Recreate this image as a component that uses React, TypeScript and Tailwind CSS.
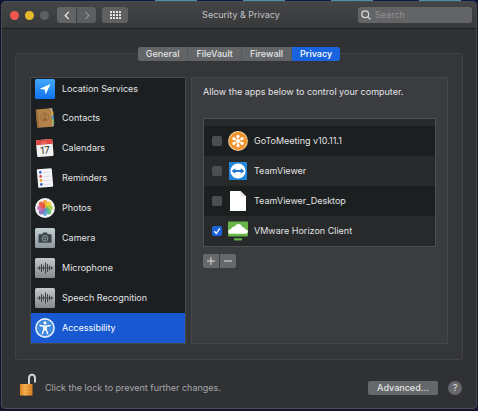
import { useState } from 'react';
import type { ReactNode } from 'react';
import clsx from 'clsx';

function LocationIcon() {
  return (
    <svg viewBox="0 0 20 20" className="size-5">
      <defs>
        <linearGradient id="location-bg" x1="0" y1="0" x2="0" y2="1">
          <stop offset="0" stopColor="#42a8fb" />
          <stop offset="1" stopColor="#1173ee" />
        </linearGradient>
      </defs>
      <rect width="20" height="20" rx="1.5" fill="url(#location-bg)" />
      <path d="M15.5 5 4.8 9.8l5 .9.8 4.7z" fill="#fff" />
    </svg>
  );
}

function ContactsIcon() {
  return (
    <svg viewBox="0 0 20 20" className="size-5">
      <g transform="rotate(-5 10 10)">
        <path d="M15 1h3v18h-3z" fill="#ddd9cf" />
        <path d="M17 4h1.8v4H17z" fill="#d9a43a" />
        <path d="M17 8h1.8v4H17z" fill="#46a0d8" />
        <path d="M17 12h1.8v4H17z" fill="#76b852" />
        <rect x="1.5" y="0.8" width="15.5" height="18.4" rx="1" fill="#b3834b" />
        <path d="M1.5 1.8a1 1 0 0 1 1-1h1v18.4h-1a1 1 0 0 1-1-1z" fill="#9c6e36" />
        <circle cx="9.8" cy="9" r="4" fill="#b0804a" stroke="#8f6432" strokeWidth="0.7" />
        <circle cx="9.8" cy="7.8" r="1.2" fill="#8f6432" />
        <path d="M7.4 11.3c.4-1.8 4.4-1.8 4.800 0-1.400 1.300-3.400 1.300-4.800 0z" fill="#8f6432" />
      </g>
    </svg>
  );
}

function CalendarIcon() {
  return (
    <svg viewBox="0 0 20 20" className="size-5">
      <g transform="rotate(-5 10 10)">
        <rect x="1.5" y="1.5" width="16.5" height="17" rx="1.2" fill="#f4f3f1" />
        <path d="M1.5 2.7c0-.7.5-1.2 1.2-1.2h14.1c.7 0 1.2.5 1.2 1.2v3.8H1.500z" fill="#dc4740" />
        <text x="9.8" y="5.5" textAnchor="middle" fontSize="3.5" fill="#f8b8b2" fontFamily="Inter, sans-serif">
          JUL
        </text>
        <text x="9.8" y="15.8" textAnchor="middle" fontSize="10" fill="#333" fontFamily="Inter, sans-serif">
          17
        </text>
      </g>
    </svg>
  );
}

function RemindersIcon() {
  const dots = ['#3a63c8', '#d9433b', '#ef9d2e', '#3d58a8'];
  return (
    <svg viewBox="0 0 20 20" className="size-5">
      <g transform="rotate(-5 10 10)">
        <rect x="2.5" y="0.7" width="15" height="18.6" rx="1" fill="#f5f4f6" />
        {dots.map((fill, i) => (
          <g key={fill}>
            <circle cx="5.8" cy={4 + i * 4} r="1.4" fill={fill} />
            <path d={`M8.5 ${4.5 + i * 4}h7`} stroke="#d2d2d8" strokeWidth="0.7" />
          </g>
        ))}
      </g>
    </svg>
  );
}

function PhotosIcon() {
  const petals = ['#f09a28', '#f3c92f', '#a9cf46', '#5cb878', '#55a1d8', '#8168bd', '#c86db0', '#e8533f'];
  return (
    <svg viewBox="0 0 20 20" className="size-5">
      <circle cx="10" cy="10" r="9.9" fill="#f7f6f4" />
      {petals.map((fill, i) => (
        <rect
          key={fill}
          x="7.600"
          y="2"
          width="4.8"
          height="7.8"
          rx="2.4"
          fill={fill}
          fillOpacity="0.9"
          transform={`rotate(${i * 45} 10 10)`}
        />
      ))}
    </svg>
  );
}

function CameraIcon() {
  return (
    <svg viewBox="0 0 20 20" className="size-5">
      <defs>
        <linearGradient id="camera-bg" x1="0" y1="0" x2="0" y2="1">
          <stop offset="0" stopColor="#c5d0d5" />
          <stop offset="1" stopColor="#8d979d" />
        </linearGradient>
      </defs>
      <rect width="20" height="20" rx="1.5" fill="url(#camera-bg)" />
      <path
        d="M4.5 6.200h2.600l1.200-1.700h3.400l1.200 1.700h2.600c.6 0 1 .4 1 1v6.600c0 .6-.4 1-1 1h-11c-.6 0-1-.4-1-1V7.200c0-.6.4-1 1-1z"
        fill="#3b444a"
      />
      <circle cx="10" cy="10.3" r="2.9" fill="none" stroke="#98a4aa" strokeWidth="0.9" />
      <circle cx="10" cy="10.3" r="1.3" fill="#78848a" />
    </svg>
  );
}

function WaveIcon() {
  return (
    <svg viewBox="0 0 20 20" className="size-5">
      <defs>
        <linearGradient id="wave-bg" x1="0" y1="0" x2="0" y2="1">
          <stop offset="0" stopColor="#c3c8c8" />
          <stop offset="1" stopColor="#868a8a" />
        </linearGradient>
      </defs>
      <rect width="20" height="20" rx="1.5" fill="url(#wave-bg)" />
      <path
        d="M2 10h16M4.500 8v4M6.500 6v8M8.500 7.500v5M10.500 4.500v11M12.500 6v8M14.500 7.500v5M16.500 8.500v3"
        stroke="#3f4446"
        strokeWidth="1"
        fill="none"
      />
    </svg>
  );
}

function AccessibilityIcon() {
  return (
    <svg viewBox="0 0 20 20" className="size-5">
      <circle cx="10" cy="10" r="9.9" fill="#e1edfa" />
      <circle cx="10" cy="10" r="8.3" fill="#4389de" />
      <circle cx="10" cy="4.9" r="1.6" fill="#fff" />
      <path
        d="M5 7.500 8.800 8.200v3.200L7.400 15.500M15 7.500l-3.800.7v3.200l1.400 4.100M9.200 8.300h1.600v3.400H9.200z"
        stroke="#fff"
        strokeWidth="1.4"
        strokeLinecap="round"
        strokeLinejoin="round"
        fill="none"
      />
    </svg>
  );
}

function GoToMeetingIcon() {
  return (
    <svg viewBox="0 0 20 20" className="size-5">
      <circle cx="10" cy="10" r="9.9" fill="#f6d5a6" />
      <circle cx="10" cy="10" r="9" fill="#ef942d" />
      <g fill="#fff">
        {[0, 60, 120, 180, 240, 300].map((angle) => (
          <g key={angle} transform={`rotate(${angle} 10 10)`}>
            <rect x="9.4" y="5.5" width="1.2" height="4" />
            <circle cx="10" cy="5.3" r="1.6" />
          </g>
        ))}
        <circle cx="10" cy="10" r="1.6" />
      </g>
    </svg>
  );
}

function TeamViewerIcon() {
  return (
    <svg viewBox="0 0 20 20" className="size-5">
      <rect x="1" y="1" width="18" height="18" rx="0.5" fill="#2387dc" />
      <circle cx="10" cy="10" r="7.6" fill="#fff" />
      <path d="m3.600 10 3.700-2.800v1.900h5.400V7.200l3.700 2.800-3.700 2.800v-1.900H7.300v1.900z" fill="#1e78cb" />
    </svg>
  );
}

function DocumentIcon() {
  return (
    <svg viewBox="0 0 20 20" className="size-5">
      <path d="M2 0h10.500L18 5.500V20H2z" fill="#fff" />
      <path d="M12.500 0 18 5.500h-5.500z" fill="#e6e6e6" />
    </svg>
  );
}

function HorizonIcon() {
  return (
    <svg viewBox="0 0 20 20" className="size-5">
      <rect y="0.5" width="20" height="15" rx="1" fill="#68b648" />
      <path
        d="M2.800 12.800c-3.600 0-3.400-4.500.2-4.500C3.300 6.500 5 5.500 6.300 6c1.700-4 7-4 8 0 1.600-.2 2.700 1 2.800 2.300 3.600 0 3.600 4.500.2 4.500z"
        fill="#fff"
      />
      <path d="M6 17.200h8v1.500c0 .5-.4.800-1 .8H7c-.6 0-1-.3-1-.8z" fill="#68b648" />
    </svg>
  );
}

function PadlockIcon() {
  return (
    <svg viewBox="0 0 17 23" className="h-[23px] w-[17px] shrink-0">
      <defs>
        <linearGradient id="padlock" x1="0" y1="0" x2="1" y2="0">
          <stop offset="0" stopColor="#d98322" />
          <stop offset="0.4" stopColor="#f8b554" />
          <stop offset="1" stopColor="#d47c1c" />
        </linearGradient>
      </defs>
      <path d="M9 11.500V5.500C9 .5 15 .5 15 5.500v4" fill="none" stroke="#cfd3d5" strokeWidth="2" />
      <rect y="11" width="12.5" height="11.5" rx="0.5" fill="url(#padlock)" />
      <path d="M0 14h12.500M0 17h12.500M0 20h12.500" stroke="#c9781f" strokeWidth="0.3" />
    </svg>
  );
}

const tabs = ['General', 'FileVault', 'Firewall', 'Privacy'];

const services: { name: string; icon: ReactNode }[] = [
  { name: 'Location Services', icon: <LocationIcon /> },
  { name: 'Contacts', icon: <ContactsIcon /> },
  { name: 'Calendars', icon: <CalendarIcon /> },
  { name: 'Reminders', icon: <RemindersIcon /> },
  { name: 'Photos', icon: <PhotosIcon /> },
  { name: 'Camera', icon: <CameraIcon /> },
  { name: 'Microphone', icon: <WaveIcon /> },
  { name: 'Speech Recognition', icon: <WaveIcon /> },
  { name: 'Accessibility', icon: <AccessibilityIcon /> },
];

const apps: { name: string; icon: ReactNode; allowed: boolean }[] = [
  { name: 'GoToMeeting v10.11.1', icon: <GoToMeetingIcon />, allowed: false },
  { name: 'TeamViewer', icon: <TeamViewerIcon />, allowed: false },
  { name: 'TeamViewer_Desktop', icon: <DocumentIcon />, allowed: false },
  { name: 'VMware Horizon Client', icon: <HorizonIcon />, allowed: true },
];

function TitleBar() {
  return (
    <header className="grid h-[27px] grid-cols-[1fr_auto_1fr] items-center border-b border-[#1d1e20] bg-linear-to-b from-[#444548] to-[#38393b] pr-1 pl-2">
      <div className="flex items-center">
        <div className="flex gap-[6px]">
          <button aria-label="Close" className="size-[9px] rounded-full bg-[#f0574f]" />
          <button aria-label="Minimize" className="size-[9px] rounded-full bg-[#e5b92c]" />
          <button aria-label="Zoom" className="size-[9px] rounded-full bg-[#5d5f62]" />
        </div>
        <div className="ml-2 flex gap-px">
          <button aria-label="Back" className="flex h-4 w-[19px] items-center justify-center rounded-l-[3px] bg-[#626466]">
            <svg viewBox="0 0 6 10" className="h-[9px] w-[6px]" fill="none" stroke="#f2f2f2" strokeWidth="1.3">
              <path d="M5 1 1 5l4 4" />
            </svg>
          </button>
          <button aria-label="Forward" className="flex h-4 w-[19px] items-center justify-center rounded-r-[3px] bg-[#5c5e60]">
            <svg viewBox="0 0 6 10" className="h-[9px] w-[6px]" fill="none" stroke="#929496" strokeWidth="1.2">
              <path d="m1 1 4 4-4 4" />
            </svg>
          </button>
        </div>
        <button aria-label="Show All" className="ml-[6px] flex h-4 w-[26px] items-center justify-center rounded-[3px] bg-[#5e6062]">
          <svg viewBox="0 0 11 8" className="h-2 w-[11px]" fill="#e4e4e4">
            {[0, 3, 6].map((y) =>
              [0, 3, 6, 9].map((x) => <rect key={`${x}-${y}`} x={x} y={y} width="2" height="2" />),
            )}
          </svg>
        </button>
      </div>
      <h1 className="text-[9px] text-[#c3c4c5]">Security &amp; Privacy</h1>
      <label className="flex h-4 w-[114px] items-center gap-1 justify-self-end rounded-[3px] bg-[#636466] pl-[3px]">
        <svg viewBox="0 0 10 10" className="size-[10px] shrink-0" fill="none" stroke="#d8d8d8" strokeWidth="1.2">
          <circle cx="4.2" cy="4.2" r="3.4" />
          <path d="m6.700 6.700 2.800 2.800" />
        </svg>
        <input
          type="search"
          aria-label="Search"
          placeholder="Search"
          className="w-full min-w-0 bg-transparent text-[9px] text-white outline-none placeholder:text-[#929395]"
        />
      </label>
    </header>
  );
}

export default function App() {
  const [tab, setTab] = useState('Privacy');
  const [service, setService] = useState('Accessibility');
  const [allowed, setAllowed] = useState<string[]>(apps.filter((a) => a.allowed).map((a) => a.name));

  const toggle = (name: string) => {
    setAllowed((prev) => (prev.includes(name) ? prev.filter((n) => n !== name) : [...prev, name]));
  };

  return (
    <div className="flex min-h-screen flex-col bg-[#11142c] px-px pb-[2px] font-['Inter',sans-serif] text-[9px] leading-3 text-[#e2e3e4]">
      {/* Desktop showing above the window */}
      <div className="flex h-px justify-end gap-[46px] bg-[#0a1744] pr-4">
        {[0, 1, 2, 3].map((i) => (
          <span key={i} className="w-[42px] bg-[#508fa9]" />
        ))}
      </div>

      <div className="flex flex-1 flex-col overflow-hidden rounded-[4px] border border-[#4b4c50] bg-[#303135]">
        <TitleBar />

        <main className="flex flex-1 flex-col px-[13px] pt-[18px]">
          <div role="tablist" className="z-10 flex justify-center gap-px self-center overflow-hidden rounded-[3px] bg-[#57595b]">
            {tabs.map((name) => (
              <button
                key={name}
                role="tab"
                aria-selected={tab === name}
                onClick={() => setTab(name)}
                className={clsx(
                  'h-[14px] px-2 font-medium leading-[14px]',
                  tab === name ? 'bg-[#1963de] text-white' : 'bg-[#626466]',
                )}
              >
                {name}
              </button>
            ))}
          </div>

          <div className="-mt-2 flex gap-[5px] rounded-[3px] border border-[#404246] bg-[#343639] px-[14px] pt-[23px] pb-[15px]">
            <ul className="w-[156px] shrink-0 border border-[#47494b] bg-[#1c1f21]">
              {services.map(({ name, icon }) => (
                <li key={name} className="group">
                  <button
                    onClick={() => setService(name)}
                    className={clsx(
                      'flex h-[30px] w-full items-center gap-[7px] pl-1 text-left group-first:h-[25px] group-first:pb-[4px]',
                      service === name && 'bg-[#1859d2] text-white',
                    )}
                  >
                    {icon}
                    {name}
                  </button>
                </li>
              ))}
            </ul>

            <section className="flex-1 border border-[#45474a] bg-[#3b3c3f] px-[11px] pt-2">
              <p>Allow the apps below to control your computer.</p>

              <ul className="mt-5 border border-[#4d4f51] bg-[#27292b] pt-[7px]">
                {apps.map(({ name, icon }) => (
                  <li key={name} className="odd:bg-[#1c1f20]">
                    <label className="flex h-[30px] items-center pl-2">
                      <span className="relative size-[10px]">
                        <input
                          type="checkbox"
                          checked={allowed.includes(name)}
                          onChange={() => toggle(name)}
                          className="peer block size-[10px] appearance-none rounded-[2px] bg-[#4b4d4f] checked:bg-[#1c62d9]"
                        />
                        <svg
                          viewBox="0 0 10 10"
                          className="pointer-events-none absolute inset-0 hidden peer-checked:block"
                          fill="none"
                          stroke="#fff"
                          strokeWidth="1.3"
                        >
                          <path d="m2.300 5.200 2 2.300 3.500-5.200" />
                        </svg>
                      </span>
                      <span className="mx-[6px]">{icon}</span>
                      {name}
                    </label>
                  </li>
                ))}
              </ul>

              <div className="mt-[7px] flex gap-px">
                <button aria-label="Add" className="flex h-[14px] w-4 items-center justify-center rounded-l-[2px] bg-[#66686a]">
                  <svg viewBox="0 0 8 8" className="size-2" stroke="#dadada">
                    <path d="M4 0v8M0 4h8" />
                  </svg>
                </button>
                <button aria-label="Remove" className="flex h-[14px] w-4 items-center justify-center rounded-r-[2px] bg-[#66686a]">
                  <svg viewBox="0 0 8 8" className="size-2" stroke="#dadada">
                    <path d="M0 4h8" />
                  </svg>
                </button>
              </div>
            </section>
          </div>

          <footer className="flex items-center pt-[13px] pr-px pl-[5px]">
            <PadlockIcon />
            <p className="mt-[6px] ml-2 text-[#a5a7a8]">Click the lock to prevent further changes.</p>
            <button className="mt-[6px] ml-auto h-[14px] w-[70px] rounded-[2px] bg-[#65676a] font-medium leading-[14px]">
              Advanced...
            </button>
            <button aria-label="Help" className="mt-[6px] ml-[10px] size-[14px] rounded-full bg-[#65676a] leading-[14px]">
              ?
            </button>
          </footer>
        </main>
      </div>
    </div>
  );
}
